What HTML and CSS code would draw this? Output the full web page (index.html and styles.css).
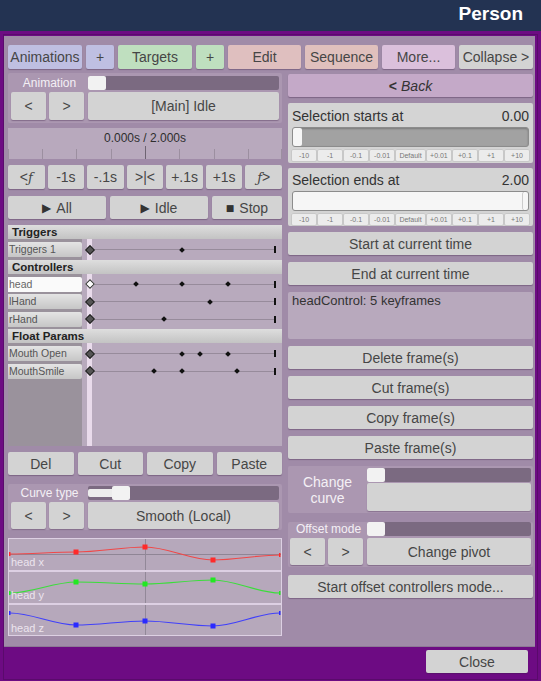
FILE: index.html
```html
<!DOCTYPE html>
<html>
<head>
<meta charset="utf-8">
<link rel="stylesheet" href="styles.css">
</head>
<body>
<div class="header"><span class="title">Person</span></div>
<div class="frame">
 <div class="inner">
  <div class="panel">
   <div class="tabs">
    <button class="btn tab t-anim">Animations</button>
    <button class="btn tab t-anim">+</button>
    <button class="btn tab t-targ">Targets</button>
    <button class="btn tab t-targ">+</button>
    <button class="btn tab t-edit">Edit</button>
    <button class="btn tab t-seq">Sequence</button>
    <button class="btn tab t-more">More...</button>
    <button class="btn tab t-coll">Collapse &gt;</button>
   </div>
   <div class="cols">
    <div class="left">
     <div class="sect anim">
      <div class="srow">
       <span class="slabel">Animation</span>
       <div class="slider"><span class="knob"></span></div>
      </div>
      <div class="brow">
       <button class="btn sq">&lt;</button>
       <button class="btn sq">&gt;</button>
       <button class="btn grow">[Main] Idle</button>
      </div>
     </div>
     <div class="scrub">
      <div class="scrubtime">0.000s / 2.000s</div>
      <svg class="ticks" width="274" height="13" viewBox="0 0 274 13">
       <g stroke="#9c8fa0" stroke-width="1">
        <line x1="0.5" y1="3" x2="0.5" y2="13"/>
        <line x1="34.5" y1="3" x2="34.5" y2="13"/>
        <line x1="68.5" y1="3" x2="68.5" y2="13"/>
        <line x1="103.5" y1="3" x2="103.5" y2="13"/>
        <line x1="171.5" y1="3" x2="171.5" y2="13"/>
        <line x1="206.5" y1="3" x2="206.5" y2="13"/>
        <line x1="240.5" y1="3" x2="240.5" y2="13"/>
        <line x1="273.5" y1="3" x2="273.5" y2="13"/>
       </g>
       <line x1="137.5" y1="0" x2="137.5" y2="13" stroke="#6e6472" stroke-width="1"/>
      </svg>
     </div>
     <div class="navrow">
      <button class="btn">&lt;<span class="ff">ƒ</span></button>
      <button class="btn">-1s</button>
      <button class="btn">-.1s</button>
      <button class="btn">&gt;|&lt;</button>
      <button class="btn">+.1s</button>
      <button class="btn">+1s</button>
      <button class="btn"><span class="ff">ƒ</span>&gt;</button>
     </div>
     <div class="playrow">
      <button class="btn"><span class="ico">▶</span> All</button>
      <button class="btn"><span class="ico">▶</span> Idle</button>
      <button class="btn"><span class="ico sm">■</span> Stop</button>
     </div>
     <div class="tracks">
      <div class="thead">Triggers</div>
      <div class="tgroup">
       <div class="trow"><span class="tlabel">Triggers 1</span><div class="track"><div class="lane"><i class="kf first"></i><i class="kf" style="left:50%"></i><i class="kend"></i></div></div></div>
      </div>
      <div class="thead">Controllers</div>
      <div class="tgroup">
       <div class="trow"><span class="tlabel sel">head</span><div class="track"><div class="lane"><i class="kf first hollow"></i><i class="kf" style="left:25%"></i><i class="kf" style="left:50%"></i><i class="kf" style="left:75%"></i><i class="kend"></i></div></div></div>
       <div class="trow"><span class="tlabel">lHand</span><div class="track"><div class="lane"><i class="kf first"></i><i class="kf" style="left:65%"></i><i class="kend"></i></div></div></div>
       <div class="trow"><span class="tlabel">rHand</span><div class="track"><div class="lane"><i class="kf first"></i><i class="kf" style="left:40%"></i><i class="kend"></i></div></div></div>
      </div>
      <div class="thead">Float Params</div>
      <div class="tgroup">
       <div class="trow"><span class="tlabel">Mouth Open</span><div class="track"><div class="lane"><i class="kf first"></i><i class="kf" style="left:50%"></i><i class="kf" style="left:60%"></i><i class="kf" style="left:75%"></i><i class="kend"></i></div></div></div>
       <div class="trow"><span class="tlabel">MouthSmile</span><div class="track"><div class="lane"><i class="kf first"></i><i class="kf" style="left:35%"></i><i class="kf" style="left:50%"></i><i class="kf" style="left:80%"></i><i class="kend"></i></div></div></div>
      </div>
      <div class="tfill"></div>
     </div>
     <div class="actrow">
      <button class="btn">Del</button>
      <button class="btn">Cut</button>
      <button class="btn">Copy</button>
      <button class="btn">Paste</button>
     </div>
     <div class="sect curve">
      <div class="srow">
       <span class="slabel">Curve type</span>
       <div class="slider"><span class="fill"></span><span class="knob"></span></div>
      </div>
      <div class="brow">
       <button class="btn sq">&lt;</button>
       <button class="btn sq">&gt;</button>
       <button class="btn grow">Smooth (Local)</button>
      </div>
     </div>
     <svg class="graph" width="274" height="98" viewBox="0 0 274 98">
      <rect x="0" y="0" width="274" height="98" fill="#b6a8bb"/>
      <line x1="0" y1="16.5" x2="274" y2="16.5" stroke="#8f8595" stroke-width="1"/>
      <line x1="137.5" y1="0" x2="137.5" y2="98" stroke="#928898" stroke-width="1"/>
      <g fill="none" stroke-width="1.2">
       <path d="M2 16 C24 16 46 14 68 14 C91 14 114 9 137 9 C160 9 182 22 205 22 C227 22 250 17 272 17" stroke="#f04848"/>
       <path d="M2 55 C24 55 46 44 68 44 C91 44 114 46 137 46 C160 46 182 42 205 42 C227 42 250 55 272 55" stroke="#3ade3a"/>
       <path d="M2 75 C24 75 46 87 68 87 C91 87 114 83 137 83 C160 83 182 88 205 88 C227 88 250 75 272 75" stroke="#4040fa"/>
      </g>
      <g fill="#ff2a2a"><rect x="65.5" y="11.5" width="5" height="5"/><rect x="134.5" y="6.5" width="5" height="5"/><rect x="202.5" y="19.5" width="5" height="5"/><rect x="1" y="14" width="1.5" height="4"/><rect x="271" y="15" width="1.5" height="4"/></g>
      <g fill="#22e822"><rect x="65.5" y="41.5" width="5" height="5"/><rect x="134.5" y="43.5" width="5" height="5"/><rect x="202.5" y="39.5" width="5" height="5"/><rect x="1" y="53" width="1.5" height="4"/><rect x="271" y="53" width="1.5" height="4"/></g>
      <g fill="#2a2aff"><rect x="65.5" y="84.5" width="5" height="5"/><rect x="134.5" y="80.5" width="5" height="5"/><rect x="202.5" y="85.5" width="5" height="5"/><rect x="1" y="73" width="1.5" height="4"/><rect x="271" y="73" width="1.5" height="4"/></g>
      <rect x="0" y="32" width="274" height="2" fill="#ddd0e3"/>
      <rect x="0" y="65" width="274" height="2" fill="#ddd0e3"/>
      <rect x="0.5" y="0.5" width="273" height="97" fill="none" stroke="#ddd0e3" stroke-width="1"/>
      <g class="glabel" fill="#ece4ee"><text x="3" y="28">head x</text><text x="3" y="61">head y</text><text x="3" y="94">head z</text></g>
     </svg>
    </div>
    <div class="right">
     <button class="btn back"><b>&lt;</b> <i>Back</i></button>
     <div class="selbox">
      <div class="selhead"><span>Selection starts at</span><span>0.00</span></div>
      <div class="selslider"><span class="sknob"></span></div>
      <div class="steps"><span>-10</span><span>-1</span><span>-0.1</span><span>-0.01</span><span>Default</span><span>+0.01</span><span>+0.1</span><span>+1</span><span>+10</span></div>
     </div>
     <div class="selbox ends">
      <div class="selhead"><span>Selection ends at</span><span>2.00</span></div>
      <div class="selslider"><span class="sfill"></span><span class="sknob"></span></div>
      <div class="steps"><span>-10</span><span>-1</span><span>-0.1</span><span>-0.01</span><span>Default</span><span>+0.01</span><span>+0.1</span><span>+1</span><span>+10</span></div>
     </div>
     <button class="btn rbtn m6">Start at current time</button>
     <button class="btn rbtn m7">End at current time</button>
     <div class="info">headControl: 5 keyframes</div>
     <button class="btn rbtn m7">Delete frame(s)</button>
     <button class="btn rbtn m7">Cut frame(s)</button>
     <button class="btn rbtn m7">Copy frame(s)</button>
     <button class="btn rbtn m7">Paste frame(s)</button>
     <div class="sect chg">
      <div class="chglabel">Change<br>curve</div>
      <div class="chgright">
       <div class="slider"><span class="knob"></span></div>
       <div class="emptybox"></div>
      </div>
     </div>
     <div class="sect offs">
      <div class="srow">
       <span class="slabel">Offset mode</span>
       <div class="slider"><span class="knob"></span></div>
      </div>
      <div class="brow">
       <button class="btn sq">&lt;</button>
       <button class="btn sq">&gt;</button>
       <button class="btn grow">Change pivot</button>
      </div>
     </div>
     <button class="btn rbtn m8">Start offset controllers mode...</button>
    </div>
   </div>
  </div>
  <div class="footer"><button class="btn close">Close</button></div>
 </div>
</div>
</body>
</html>
```

FILE: styles.css
```css
* { box-sizing: border-box; }
html, body { margin: 0; padding: 0; }
body {
  width: 541px; height: 681px; overflow: hidden;
  background: #6d0b83;
  font-family: "Liberation Sans", Arial, sans-serif;
  color: #3e3e3e;
}
.header {
  height: 31px; background: #233352;
  display: flex; justify-content: flex-end; align-items: center;
  padding: 0 18px 3px 0;
}
.title { color: #fff; font-weight: bold; font-size: 19px; }
.frame { padding: 3px 3px 1px 3px; }
.inner { border: 1px solid #5a0a6c; height: 646px; }
.panel {
  margin: 1px 2px 0 0; height: 611px;
  background: #a08ba8;
  padding: 9px 2px 0 4px;
  border-bottom: 1px solid #8d7895;
}
.btn {
  font-family: inherit; font-size: 14px; color: #464646;
  background: #d3d3d3; border: none; border-radius: 2px;
  box-shadow: 0 1px 1px rgba(60, 30, 70, 0.35);
  padding: 0; margin: 0; display: flex; align-items: center; justify-content: center;
  white-space: nowrap;
}
.tabs {
  display: grid; grid-template-columns: 74px 28px 74px 28px 73px 73px 73px 1fr;
  gap: 4px; height: 24px;
}
.t-anim { background: #bfbfe2; }
.t-targ { background: #bfdfbf; }
.t-edit { background: #dfbfbf; }
.t-seq { background: #e0c0bd; }
.t-more { background: #dbc0dc; }
.t-coll { background: #d3d3d3; }
.cols { display: flex; gap: 6px; }
.left { width: 274px; padding-top: 4px; display: flex; flex-direction: column; }
.right { flex: 1; padding-top: 5px; display: flex; flex-direction: column; }

.sect { background: #ab97b1; border-radius: 2px; }
.anim { height: 50px; padding: 3px 3px 0 3px; }
.srow { display: flex; height: 14px; align-items: center; }
.slabel { width: 77px; text-align: center; color: #f4f0f5; font-size: 12px; }
.slider {
  flex: 1; height: 14px; background: #7b6a81; border-radius: 2px;
  display: flex; align-items: center;
}
.knob { width: 18px; height: 14px; background: #f2f2f2; border-radius: 2px; }
.fill { width: 24px; height: 8px; background: #ececec; border-radius: 2px 0 0 2px; }
.brow { display: flex; margin-top: 2px; height: 28px; gap: 3px; }
.brow .sq { width: 35px; }
.brow .grow { flex: 1; margin-left: 1px; }

.scrub {
  margin-top: 5px; height: 31px; background: #b8a9bd;
  display: flex; flex-direction: column; align-items: center;
}
.scrubtime { font-size: 12px; color: #2e2e2e; margin-top: 3px; height: 15px; }
.ticks { display: block; margin-top: 0; }

.navrow {
  margin-top: 6px; height: 24px;
  display: grid; grid-template-columns: repeat(7, 1fr); gap: 3px;
}
.ff { font-family: "DejaVu Serif", serif; font-style: italic; font-size: 13px; }
.playrow {
  margin-top: 7px; height: 23px;
  display: grid; grid-template-columns: 98px 98px 1fr; gap: 4px;
}
.ico { font-family: "DejaVu Sans", sans-serif; font-size: 12px; color: #333; margin-right: 5px; }
.ico.sm { font-size: 9px; }

.tracks {
  margin-top: 6px; height: 221px;
  background: linear-gradient(to right, #9a929c 0 74px, #b8aabd 74px 79px, #e9dbeb 79px 84px, #b8aabd 84px);
  display: flex; flex-direction: column;
}
.thead {
  height: 14px; flex: none;
  background: linear-gradient(#dedede, #c3c3c3);
  font-weight: bold; font-size: 11.5px; color: #222;
  padding-left: 4px; line-height: 14px;
  margin-bottom: 3px;
}
.tgroup { display: flex; flex-direction: column; gap: 2.5px; margin-bottom: 2.5px; }
.trow { display: flex; height: 15px; }
.tlabel {
  width: 74px; flex: none;
  background: linear-gradient(#e4e4e4, #c6c6c6);
  font-size: 10.5px; color: #555; padding-left: 1px; line-height: 15px;
  border-radius: 0 2px 2px 0;
}
.tlabel.sel { background: #fafafa; color: #666; }
.track { flex: 1; position: relative; }
.lane {
  position: absolute; left: 8px; right: 8px; top: 0; bottom: 0;
  background: linear-gradient(#978b9b, #978b9b) no-repeat 0 7px / 100% 1px;
}
.kf {
  position: absolute; top: 7.5px; left: 0; width: 4px; height: 4px;
  background: #111; transform: translate(-50%, -50%) rotate(45deg);
}
.kf.first { width: 7px; height: 7px; background: #555; border: 1px solid #222; }
.kf.first.hollow { background: #fff; border: 1.5px solid #333; }
.kend { position: absolute; left: 100%; top: 4px; width: 2px; height: 7px; background: #111; }
.tfill { flex: 1; }

.actrow {
  margin-top: 6px; height: 23px;
  display: grid; grid-template-columns: repeat(4, 1fr); gap: 4px;
}
.curve { margin-top: 9px; height: 46px; padding: 2px 3px 0 3px; }
.curve .brow { height: 27px; }
.graph { display: block; margin-top: 8px; }
.glabel { font-family: "Liberation Sans", Arial, sans-serif; font-size: 11px; }

.back { height: 23px; background: #c4a9c8; color: #333; }
.back b { margin-right: 4px; }
.back i { font-style: italic; }
.selbox {
  margin-top: 6px; height: 60px; background: #d4d4d4; border-radius: 2px;
  padding: 0 4px;
}
.selbox.ends { margin-top: 5px; height: 58px; }
.selhead {
  display: flex; justify-content: space-between; font-size: 14px; color: #333;
  height: 24px; align-items: center; padding-top: 1px;
}
.selbox.ends .selhead { height: 23px; }
.selslider {
  height: 20px; background: #a2a2a2; border: 1px solid #8c8c8c; border-radius: 3px;
  display: flex; box-shadow: inset 0 1px 2px rgba(0,0,0,.25);
}
.sknob { width: 9px; background: #f6f6f6; border-radius: 2px; }
.sfill { flex: 1; background: #f6f6f6; border-radius: 2px 0 0 2px; }
.ends .sknob { width: 6px; margin-left: -1px; border-left: 1px solid #ccc; }
.steps {
  display: grid; grid-template-columns: repeat(4, 1fr) 1.2fr repeat(4, 1fr);
  gap: 2px; margin-top: 3px; height: 11px;
}
.steps span {
  background: #ececec; font-size: 7px; color: #777; text-align: center; line-height: 11px;
  border-radius: 1px; box-shadow: 0 0 0 0.5px #bbb;
}
.rbtn { height: 23px; flex: none; }
.m6 { margin-top: 6px; }
.m7 { margin-top: 7px; }
.m8 { margin-top: 8px; }
.info {
  margin-top: 7px; height: 47px; background: #b8a9bd; border-radius: 2px;
  font-size: 13px; color: #333; padding: 1px 4px;
}
.chg { margin-top: 7px; height: 47px; display: flex; padding: 2px 2px 2px 0; }
.chglabel {
  width: 79px; text-align: center; color: #f4f0f5; font-size: 14px; line-height: 16px;
  padding-top: 6px;
}
.chgright { flex: 1; display: flex; flex-direction: column; }
.chgright .slider { flex: none; }
.emptybox { margin-top: 1px; flex: 1; background: #d3d3d3; border-radius: 2px; box-shadow: 0 1px 1px rgba(60,30,70,.3); }
.offs { margin-top: 9px; height: 45px; padding: 0 2px; }
.offs .slabel { width: 77px; }
.offs .brow { height: 27px; }
.footer { display: flex; justify-content: flex-end; padding: 3px 9px 0 0; }
.close { width: 102px; height: 23px; }
```
